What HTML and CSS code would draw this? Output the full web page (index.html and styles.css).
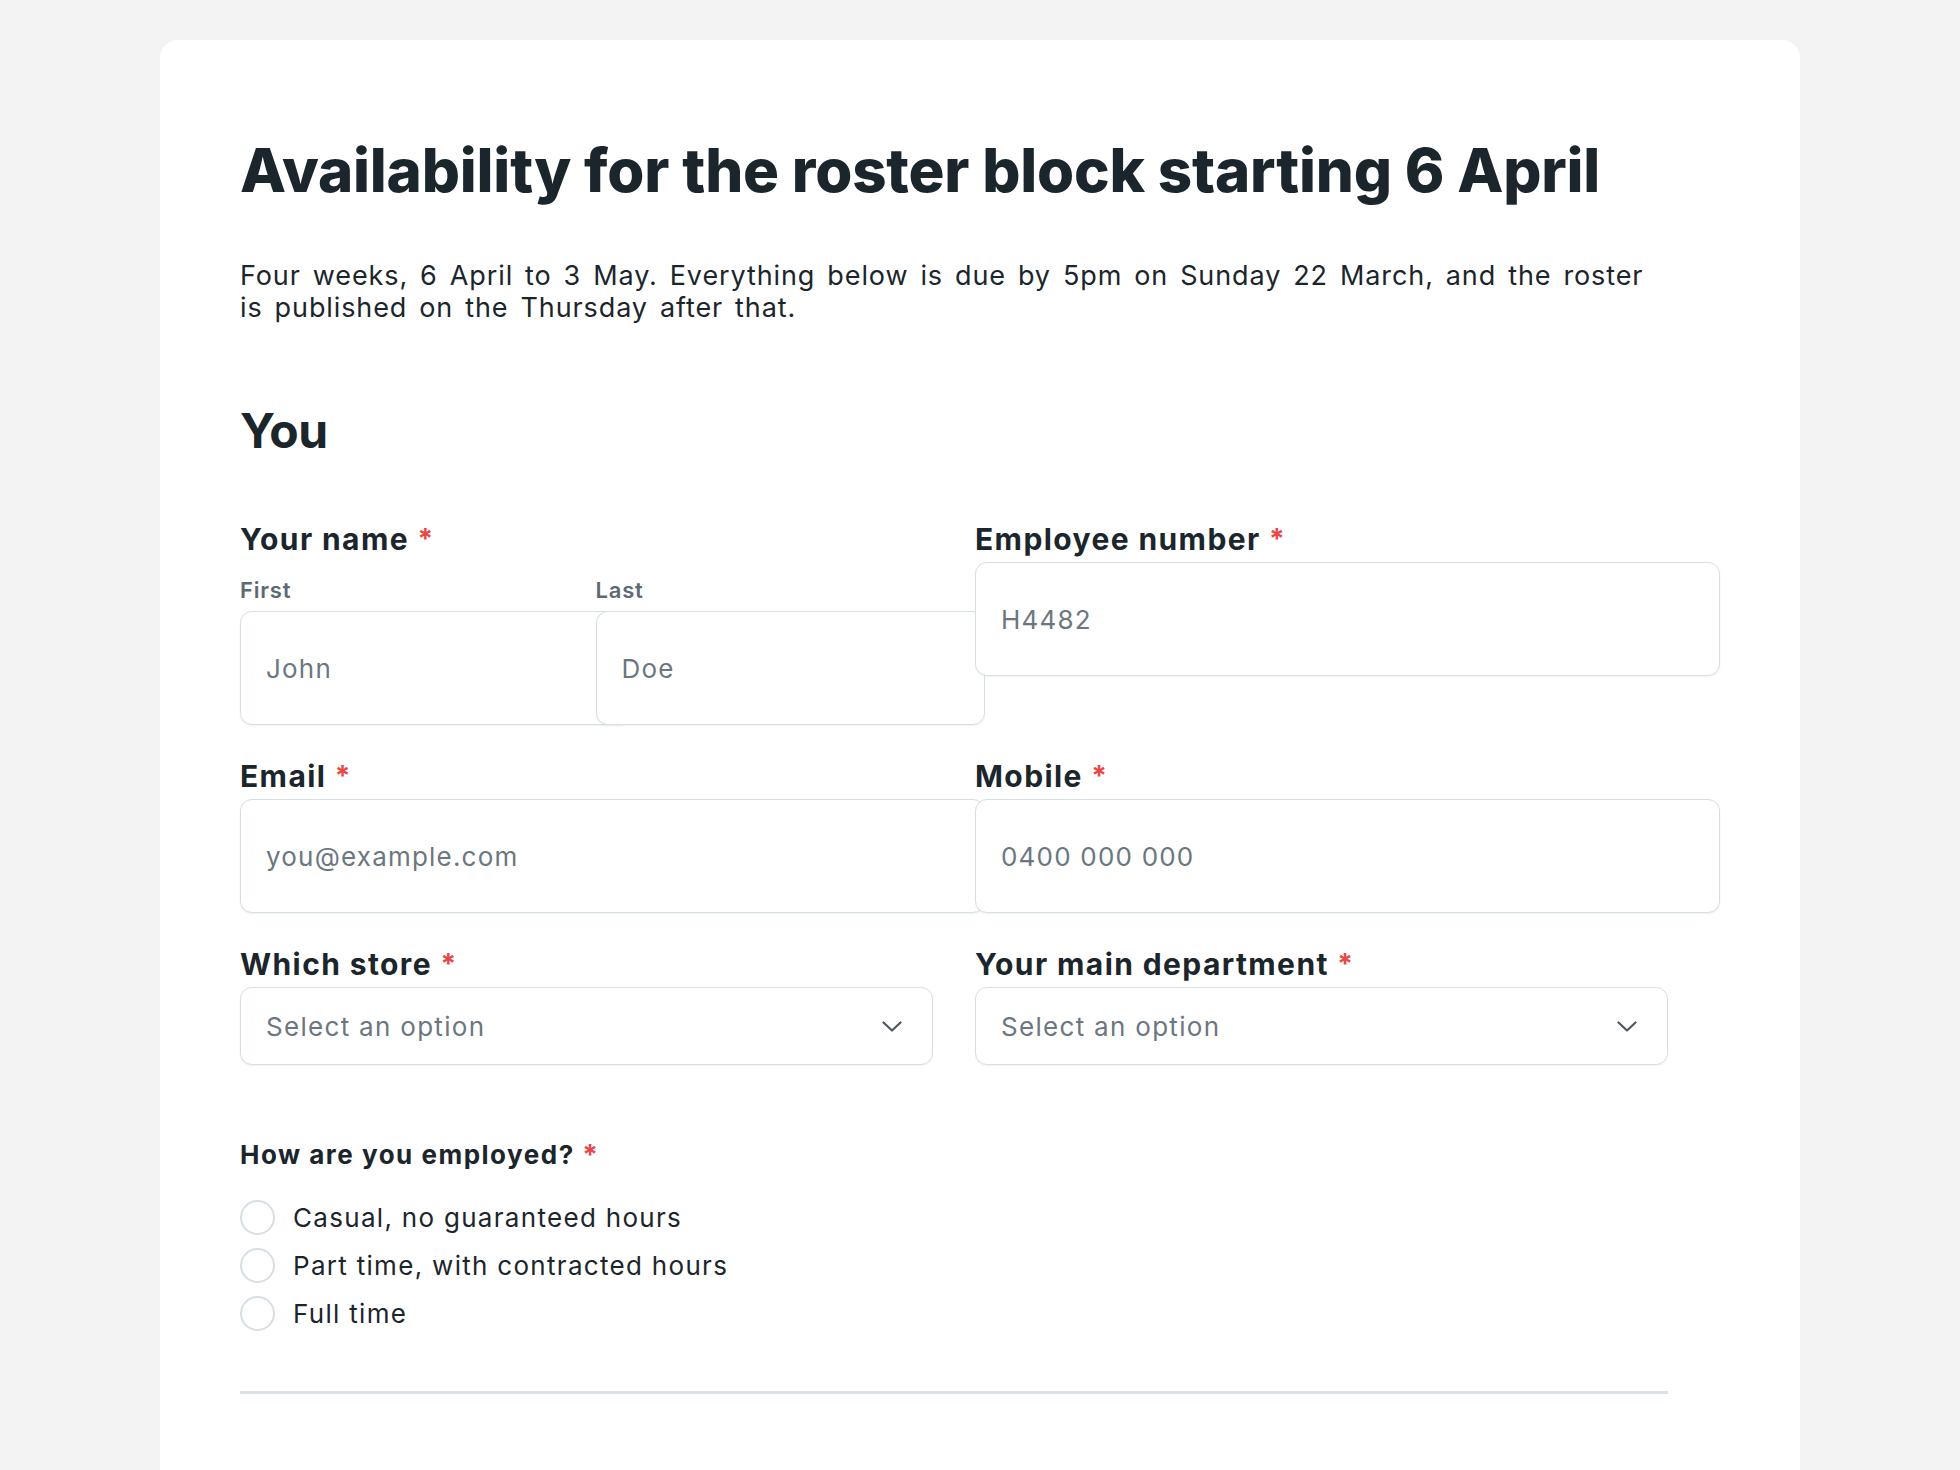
FILE: index.html
```html
<!DOCTYPE html>
<html lang="en">
<head>
    <meta charset="UTF-8">
    <meta name="viewport" content="width=device-width, initial-scale=1.0">
    <title>Roster availability</title>
    <link rel="stylesheet" href="styles.css">
</head>
<body>

<div class="page">
    <div class="card">
        <h1>Availability for the roster block starting 6 April</h1>
        <p class="intro">Four weeks, 6 April to 3 May. Everything below is due by 5pm on Sunday 22 March, and the roster is published on the Thursday after that.</p>

        <h2>You</h2>

        <div class="form">
            <div class="grid">
                <!-- name, split in two -->
                <div class="field">
                    <label class="label">Your name <span class="req">*</span></label>
                    <div class="name-row">
                        <div>
                            <span class="sublabel">First</span>
                            <input type="text" placeholder="John">
                        </div>
                        <div>
                            <span class="sublabel">Last</span>
                            <input type="text" placeholder="Doe">
                        </div>
                    </div>
                </div>

                <div class="field">
                    <label class="label">Employee number <span class="req">*</span></label>
                    <input type="text" placeholder="H4482">
                </div>

                <div class="field">
                    <label class="label">Email <span class="req">*</span></label>
                    <input type="email" placeholder="you@example.com">
                </div>

                <div class="field">
                    <label class="label">Mobile <span class="req">*</span></label>
                    <input type="tel" placeholder="0400 000 000">
                </div>

                <div class="field">
                    <label class="label">Which store <span class="req">*</span></label>
                    <div class="select-wrap">
                        <select>
                            <option>Select an option</option>
                        </select>
                        <svg class="chevron" width="20" height="11" viewBox="0 0 20 11"><path d="M1.5 1.5 L10 9.5 L18.5 1.5" fill="none" stroke="#4b5961" stroke-width="2.2" stroke-linecap="round" stroke-linejoin="round"/></svg>
                    </div>
                </div>

                <div class="field">
                    <label class="label">Your main department <span class="req">*</span></label>
                    <div class="select-wrap">
                        <select>
                            <option>Select an option</option>
                        </select>
                        <svg class="chevron" width="20" height="11" viewBox="0 0 20 11"><path d="M1.5 1.5 L10 9.5 L18.5 1.5" fill="none" stroke="#4b5961" stroke-width="2.2" stroke-linecap="round" stroke-linejoin="round"/></svg>
                    </div>
                </div>
            </div>

            <!-- employment type -->
            <div class="question">How are you employed? <span class="req">*</span></div>
            <div class="options">
                <label class="option"><input type="radio" name="employed"> Casual, no guaranteed hours</label>
                <label class="option"><input type="radio" name="employed"> Part time, with contracted hours</label>
                <label class="option"><input type="radio" name="employed"> Full time</label>
            </div>

            <hr class="divider">
        </div>
    </div>
</div>

</body>
</html>
```

FILE: styles.css
```css
body {
    margin: 0;
    background-color: #f3f3f3;
    font-family: Inter, "Open Sans", sans-serif;
    color: #1b262c;
}
.page {
    padding: 40px 160px 0;
}
.card {
    background-color: #fff;
    border-radius: 18px;
    padding: 94px 80px 120px;
    min-height: 1400px;
    box-sizing: border-box;
}
h1 {
    margin: 0;
    font-size: 60px;
    line-height: 72px;
    font-weight: 800;
    letter-spacing: -0.2px;
}
.intro {
    margin: 54px 0 0;
    font-size: 27px;
    line-height: 32px;
    letter-spacing: 0.9px;
    word-spacing: 3.5px;
    max-width: 1428px;
}
h2 {
    margin: 78px 0 0;
    font-size: 48px;
    line-height: 58px;
    font-weight: 700;
    letter-spacing: -0.5px;
}
.form {
    max-width: 1428px;
    margin-top: 58px;
}
.grid {
    display: grid;
    grid-template-columns: minmax(0, 1fr) minmax(0, 1fr);
    column-gap: 42px;
    row-gap: 30px;
    align-items: start;
}
.label {
    display: block;
    font-size: 30px;
    line-height: 42px;
    font-weight: 700;
    letter-spacing: 1.4px;
    margin-bottom: 2px;
}
.req {
    color: #ef4444;
    font-size: 28px;
    font-weight: 700;
    vertical-align: top;
    margin-left: 0;
}
.name-row {
    display: grid;
    grid-template-columns: minmax(0, 1fr) minmax(0, 1fr);
    column-gap: 18px;
}
.sublabel {
    display: block;
    font-size: 22px;
    line-height: 30px;
    font-weight: 600;
    letter-spacing: 0.8px;
    color: #5b6a73;
    margin: 13px 0 6px;
}
.field input {
    display: block;
    width: 100%;
    height: 112px;
    padding: 0 25px;
    border: 1px solid #d5dfe4;
    border-radius: 12px;
    background-color: #fff;
    font-family: inherit;
    font-size: 26px;
    letter-spacing: 1.2px;
    color: #1b262c;
    box-shadow: 0 1px 2px rgba(20, 40, 50, 0.06);
}
.field input::placeholder {
    color: #6b7780;
}
.select-wrap {
    position: relative;
}
.select-wrap select {
    display: block;
    width: 100%;
    height: 78px;
    padding: 0 60px 0 25px;
    border: 1px solid #d5dfe4;
    border-radius: 12px;
    background-color: #fff;
    font-family: inherit;
    font-size: 26px;
    letter-spacing: 1.3px;
    color: #6b7780;
    appearance: none;
    -webkit-appearance: none;
    box-shadow: 0 1px 2px rgba(20, 40, 50, 0.06);
}
.chevron {
    position: absolute;
    right: 31px;
    top: 34px;
}
.question {
    margin-top: 72px;
    font-size: 26px;
    line-height: 36px;
    font-weight: 700;
    letter-spacing: 1.5px;
}
.options {
    margin-top: 20px;
}
.option {
    display: flex;
    align-items: center;
    gap: 18px;
    height: 48px;
    font-size: 26px;
    letter-spacing: 1.3px;
}
.option input {
    appearance: none;
    -webkit-appearance: none;
    flex: none;
    width: 35px;
    height: 35px;
    margin: 0;
    border: 2px solid #d5dfe4;
    border-radius: 50%;
    background-color: #fff;
}
.divider {
    margin: 54px 0 0;
    border: none;
    border-top: 3px solid #d8e2e7;
}
```
